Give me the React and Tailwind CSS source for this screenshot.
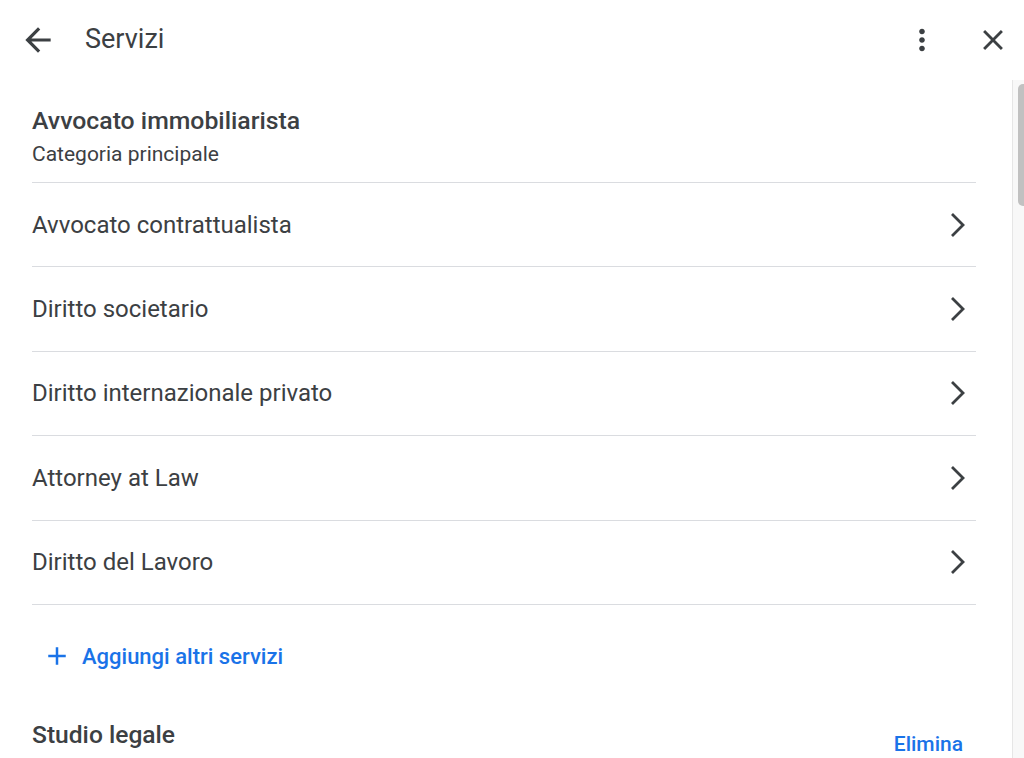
import React from "react";

const items = [
  "Avvocato contrattualista",
  "Diritto societario",
  "Diritto internazionale privato",
  "Attorney at Law",
  "Diritto del Lavoro",
];

function Chevron() {
  return (
    <svg width="20" height="26" viewBox="0 0 20 26" className="shrink-0">
      <polyline points="5,2 16,13 5,24" fill="none" stroke="#3c4043" strokeWidth="2.8" />
    </svg>
  );
}

export default function App() {
  return (
    <div className="w-[1024px] h-[758px] overflow-hidden bg-white text-[#3c4043] flex flex-col" style={{ fontFamily: "Roboto, 'Noto Sans', sans-serif" }}>
      <header className="h-[80px] shrink-0 flex items-center">
        <svg width="38" height="38" viewBox="0 0 24 24" className="ml-[19px]" fill="#3c4043">
          <path d="M20 11H7.83l5.59-5.59L12 4l-8 8 8 8 1.41-1.41L7.83 13H20v-2z" />
        </svg>
        <h1 className="ml-[28px] text-[27px] leading-none pb-[2px]">Servizi</h1>
        <div className="flex-1" />
        <svg width="34" height="34" viewBox="0 0 24 24" className="mr-[37px]" fill="#3c4043">
          <path d="M12 8c1.1 0 2-.9 2-2s-.9-2-2-2-2 .9-2 2 .9 2 2 2zm0 2c-1.1 0-2 .9-2 2s.9 2 2 2 2-.9 2-2-.9-2-2-2zm0 6c-1.1 0-2 .9-2 2s.9 2 2 2 2-.9 2-2-.9-2-2-2z" />
        </svg>
        <svg width="34" height="34" viewBox="0 0 24 24" className="mr-[14px]" fill="#3c4043">
          <path d="M19 6.41L17.59 5 12 10.59 6.41 5 5 6.41 10.59 12 5 17.59 6.41 19 12 13.41 17.59 19 19 17.59 13.41 12z" />
        </svg>
      </header>
      <div className="flex flex-1 min-h-0">
        <main className="flex-1 pl-[32px] pr-[36px] pt-[26px]">
          <div className="pb-[14px] border-b border-[#dadce0]">
            <h2 className="text-[24.8px] leading-[30px] font-medium">Avvocato immobiliarista</h2>
            <p className="text-[21px] leading-[28px] mt-[4px]">Categoria principale</p>
          </div>
          <ul>
            {items.map((t) => (
              <li key={t} className="h-[84.4px] border-b border-[#dadce0] flex items-center justify-between pr-[9px]">
                <span className="text-[24px]">{t}</span>
                <Chevron />
              </li>
            ))}
          </ul>
          <button className="mt-[35px] ml-[10px] flex items-center text-[#1a73e8]">
            <svg width="30" height="30" viewBox="0 0 24 24" fill="#1a73e8">
              <path d="M19 13h-6v6h-2v-6H5v-2h6V5h2v6h6v2z" />
            </svg>
            <span className="ml-[10px] text-[22px] font-medium">Aggiungi altri servizi</span>
          </button>
          <div className="mt-[47px] flex items-start justify-between pr-[13px]">
            <h3 className="text-[24.6px] leading-[30px] font-medium">Studio legale</h3>
            <span className="mt-[11px] text-[21px] leading-[26px] font-medium text-[#1a73e8]">Elimina</span>
          </div>
        </main>
        <div className="w-[12px] shrink-0 bg-[#f8f8f8] border-l border-[#e6e6e6] pt-[4px] pl-[5px]">
          <div className="h-[122px] w-[10px] rounded-[6px] bg-[#c1c1c1]" />
        </div>
      </div>
    </div>
  );
}
